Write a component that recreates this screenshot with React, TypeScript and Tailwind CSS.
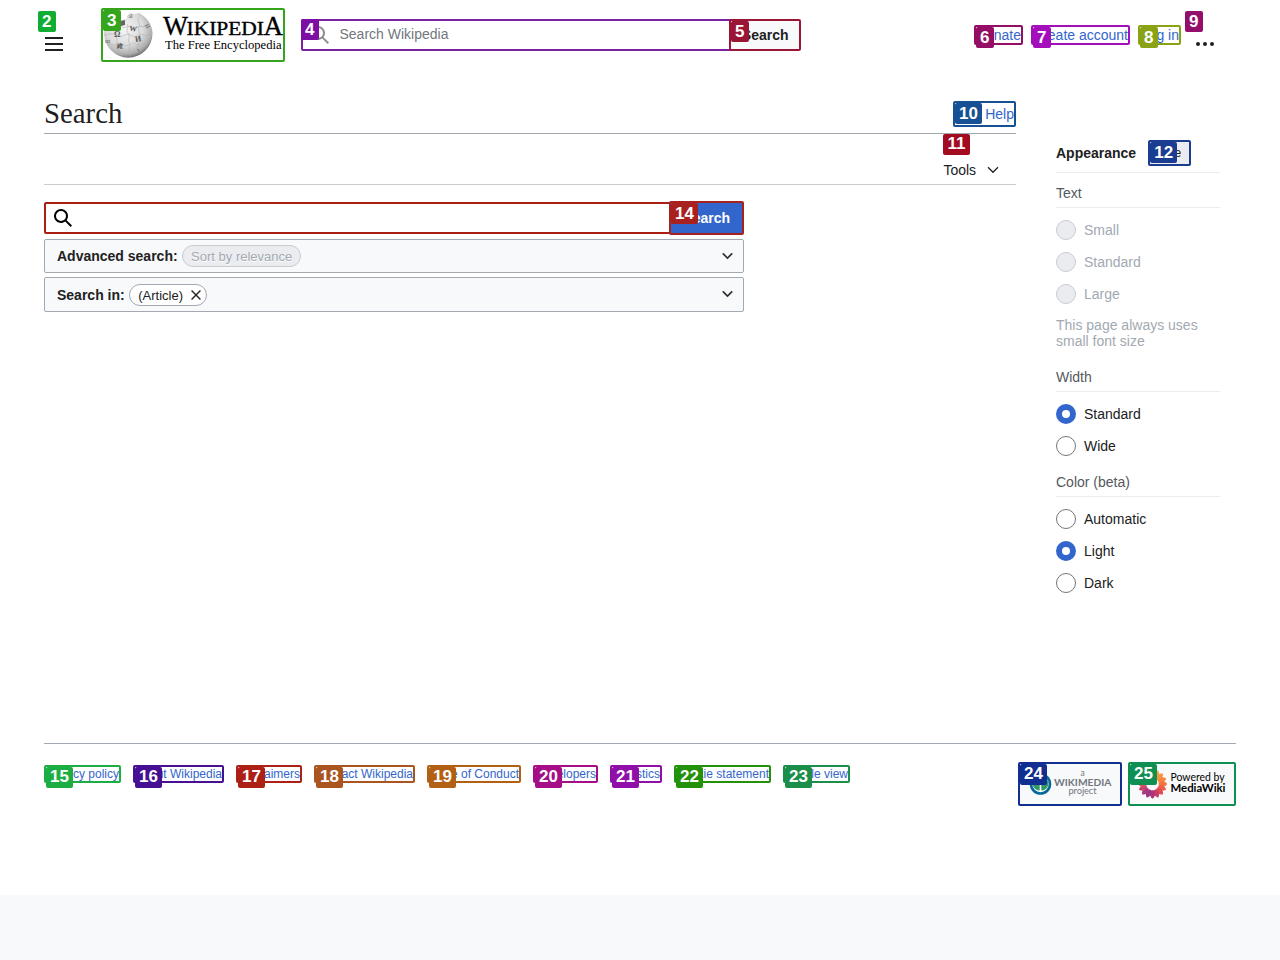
import type { ReactNode } from 'react';
import clsx from 'clsx';

const SEARCH = 'M12.2 13.6a7 7 0 1 1 1.4-1.4l5.4 5.4-1.4 1.4zM3 8a5 5 0 1 0 10 0A5 5 0 0 0 3 8';
const EXPAND = 'm17.5 4.75-7.5 7.5-7.5-7.5L1 6.25l9 9 9-9z';
const CLOSE =
  'm4.34 2.93 12.73 12.73-1.41 1.41L2.93 4.35zM17.07 4.34 4.34 17.07l-1.41-1.41L15.66 2.93z';

function Icon({ d, className }: { d: string; className: string }) {
  return (
    <svg viewBox="0 0 20 20" className={clsx('shrink-0 fill-current', className)}>
      <path d={d} />
    </svg>
  );
}

type BadgeProps = { n: number; color: string; className?: string; raised?: boolean };

function Badge({ n, color, className = 'left-0 top-0', raised }: BadgeProps) {
  return (
    <span
      className={clsx(
        'absolute z-10 flex h-[21px] justify-center rounded-[2px] text-[17px] font-bold text-white',
        raised ? 'leading-[19px]' : 'leading-[21px]',
        n > 9 ? 'w-[27px]' : 'w-[17.5px]',
        color,
        className,
      )}
    >
      {n}
    </span>
  );
}

type BoxProps = {
  n: number;
  border: string;
  bg: string;
  className: string;
  raised?: boolean;
  children: ReactNode;
};

function Box({ n, border, bg, className, raised, children }: BoxProps) {
  return (
    <div className={clsx('relative flex shrink-0 items-center rounded-[2px] border-2 whitespace-nowrap', border, className)}>
      <Badge n={n} color={bg} raised={raised} />
      {children}
    </div>
  );
}

function Logo() {
  return (
    <svg viewBox="103 10 180 50" className="h-[50px] w-[180px]">
      <defs>
        <radialGradient id="globe" cx="0.42" cy="0.35" r="0.65">
          <stop offset="0" stopColor="#f6f6f6" />
          <stop offset="0.6" stopColor="#dadada" />
          <stop offset="0.88" stopColor="#adadad" />
          <stop offset="1" stopColor="#777" />
        </radialGradient>
      </defs>
      <path
        d="M114 15l6 6 8-3 1-5 6 1 4-1c8 4 13.500 12 13.500 20.500a24.200 24.200 0 0 1-48.400 0C104.100 25 108 18.500 114 15z"
        fill="url(#globe)"
      />
      <path d="M120 21l5-1v5l-4 1z" fill="#666" />
      <g fill="none" stroke="#b0b0b0" strokeWidth="0.6">
        <path d="M104 35c3 1 4-2 7-1s3-1 6 0 2 4 6 2 3-2 7-1 3 3 7 1 3-2 7-1 4 1 8-1" />
        <path d="M107 45c4-2 5 1 8 0s3-3 7-1 3 2 7 1 4-3 7-1 5 1 12-1" />
        <path d="M122 27c3 2 5-2 8 0s4 2 7 0 5 1 8-1" />
        <path d="M116 30c2 3-2 4 0 7s1 5 0 8 3 4 5 10M127 24c3 4-2 5 1 9s-1 5 1 9-1 4 1 14M139 17c-3 5 2 6 0 10s2 5 0 9 2 5-1 9 1 3-1 8" />
      </g>
      <g fill="#555" fontFamily="Liberation Serif, serif">
        <text x="114" y="36.500" fontSize="8" fontWeight="bold">Ω</text>
        <text x="129" y="30.500" fontSize="7.500" fontWeight="bold" transform="rotate(10 129 30)">W</text>
        <text x="135.500" y="42" fontSize="8" fontWeight="bold" transform="rotate(-10 135 42)">И</text>
        <text x="117" y="47.500" fontSize="6" fontWeight="bold">維</text>
        <text x="144" y="26" fontSize="6" transform="rotate(60 145 26)">И</text>
        <text x="105" y="43" fontSize="5">Ш</text>
        <text x="137" y="52" fontSize="5">ን</text>
        <text x="127" y="18" fontSize="5">വി</text>
      </g>
      <g fontFamily="Liberation Serif, serif" fill="#000" stroke="#000">
        <text x="163" y="34.800" fontSize="26.500" strokeWidth="0.35" textLength="25" lengthAdjust="spacingAndGlyphs">W</text>
        <text x="186.500" y="34.800" fontSize="19.300" strokeWidth="0.35" textLength="77.500" lengthAdjust="spacingAndGlyphs">IKIPEDI</text>
        <text x="263.500" y="34.800" fontSize="26.500" strokeWidth="0.35" textLength="19.500" lengthAdjust="spacingAndGlyphs">A</text>
        <text x="165" y="49.200" fontSize="13.300" strokeWidth="0" textLength="116.500" lengthAdjust="spacingAndGlyphs">The Free Encyclopedia</text>
      </g>
    </svg>
  );
}

function Radio({ label, on, disabled }: { label: string; on?: boolean; disabled?: boolean }) {
  return (
    <div className={clsx('flex h-8 items-center gap-2', disabled && 'text-[#a2a9b1]')}>
      <span
        className={clsx(
          'h-5 w-5 rounded-full',
          disabled && 'border border-[#c8ccd1] bg-[#eaecf0]',
          on && 'border-[6px] border-[#3366cc] bg-white',
          !on && !disabled && 'border border-[#72777d] bg-white',
        )}
      />
      {label}
    </div>
  );
}

function GroupTitle({ children }: { children: ReactNode }) {
  return <div className="flex h-[30px] items-center border-b border-[#eaecf0] text-[#54595d]">{children}</div>;
}

const footerLinks = [
  { n: 15, label: 'Privacy policy', border: 'border-[#1cae42]', bg: 'bg-[#1cae42]', w: 'w-[77px]' },
  { n: 16, label: 'About Wikipedia', border: 'border-[#470f94]', bg: 'bg-[#470f94]', w: 'w-[91px]' },
  { n: 17, label: 'Disclaimers', border: 'border-[#ad2016]', bg: 'bg-[#ad2016]', w: 'w-[66px]' },
  { n: 18, label: 'Contact Wikipedia', border: 'border-[#aa551f]', bg: 'bg-[#aa551f]', w: 'w-[101px]' },
  { n: 19, label: 'Code of Conduct', border: 'border-[#b26114]', bg: 'bg-[#b26114]', w: 'w-[94px]' },
  { n: 20, label: 'Developers', border: 'border-[#a50e87]', bg: 'bg-[#a50e87]', w: 'w-[65px]' },
  { n: 21, label: 'Statistics', border: 'border-[#900fa8]', bg: 'bg-[#900fa8]', w: 'w-[52px]' },
  { n: 22, label: 'Cookie statement', border: 'border-[#24910b]', bg: 'bg-[#24910b]', w: 'w-[97px]' },
  { n: 23, label: 'Mobile view', border: 'border-[#1b8e4a]', bg: 'bg-[#1b8e4a]', w: 'w-[67px]' },
];

const petals = Array.from({ length: 16 }, (_, i) => i * 22.5);
const petalColors = ['#fbb040', '#fba33f', '#f9953f', '#f8853f', '#f4743f', '#ee5f49', '#e04a55', '#cb3c65', '#b03475', '#9c3584', '#a93a7b', '#c8446d', '#dd5160', '#ed6a53', '#f68448', '#fb9d42'];

export default function App() {
  return (
    <div className="flex h-[960px] w-[1280px] flex-col overflow-hidden bg-[#f8f9fa] font-['Liberation_Sans',sans-serif] text-[14px] leading-4 text-[#202122]">
      <div className="flex h-[895px] flex-col bg-white">
        <header className="flex h-[70px] shrink-0 items-center pr-[63px] pl-[38px]">
          <div className="relative h-12 w-8 pt-[26px] pl-[7px]">
            <Badge n={2} color="bg-[#10ad34]" />
            <div className="flex w-[18px] flex-col gap-1">
              <span className="h-0.5 bg-[#202122]" />
              <span className="h-0.5 bg-[#202122]" />
              <span className="h-0.5 bg-[#202122]" />
            </div>
          </div>
          <Box n={3} border="border-[#34a51c]" bg="bg-[#34a51c]" className="ml-[31px] h-[54px] w-[184px]">
            <Logo />
          </Box>
          <div className="ml-4 flex">
            <div className="relative flex h-8 w-[430px] items-center rounded-l-[2px] border-2 border-[#7b22a0] pl-[7px]">
              <Badge n={4} color="bg-[#7d0ea3]" className="-left-0.5 -top-0.5" />
              <Icon d={SEARCH} className="h-5 w-5 text-[#8f8f8f]" />
              <span className="ml-[9.500px] -translate-y-px text-[#72777d]">Search Wikipedia</span>
            </div>
            <Box n={5} border="border-[#9b1635]" bg="bg-[#9b1635]" className="-ml-0.5 h-8 w-[72px] justify-end bg-[#f8f9fa] pr-[10.500px] font-bold">
              Search
            </Box>
          </div>
          <nav className="ml-auto flex items-center gap-2 text-[#3366cc]">
            <Box n={6} border="border-[#930e64]" bg="bg-[#930e64]" className="h-5 w-[49px] justify-end">Donate</Box>
            <Box n={7} border="border-[#a40fbb]" bg="bg-[#a40fbb]" className="h-5 w-[99px] justify-end">Create account</Box>
            <Box n={8} border="border-[#8aa315]" bg="bg-[#8aa315]" className="h-5 w-[43px] justify-end">Log in</Box>
          </nav>
          <div className="relative ml-1 h-12 w-8 pt-[31px] pl-[11px]">
            <Badge n={9} color="bg-[#940e6c]" />
            <div className="flex gap-[3px]">
              <span className="h-1 w-1 rounded-full bg-[#202122]" />
              <span className="h-1 w-1 rounded-full bg-[#202122]" />
              <span className="h-1 w-1 rounded-full bg-[#202122]" />
            </div>
          </div>
        </header>

        <div className="flex h-[673px] shrink-0 pl-11">
          <main className="w-[972px] pt-7">
            <div className="flex h-9 items-center border-b border-[#a2a9b1]">
              <h1 className="-translate-y-[3px] font-['Liberation_Serif',serif] text-[28.800px] leading-9 text-black/90">Search</h1>
              <Box n={10} border="border-[#165293]" bg="bg-[#165293]" className="-mt-[3px] ml-auto h-[26px] w-[63px] justify-end bg-white text-[#3366cc]">
                Help
              </Box>
            </div>
            <div className="flex h-[51px] justify-end border-b border-[#c8ccd1]">
              <div className="relative flex w-[72.600px] items-center gap-[11px] pt-[22px]">
                <Badge n={11} color="bg-[#a20b20]" raised className="-left-[0.4px] top-0" />
                Tools
                <Icon d={EXPAND} className="h-3 w-3" />
              </div>
            </div>
            <div className="mt-4 flex w-[700px] flex-col gap-1">
              <div className="flex h-[34px] items-center">
                <div className="flex h-8 w-[627px] items-center rounded-[2px] border-2 border-[#ab1f11] pl-[7px]">
                  <Icon d={SEARCH} className="h-5 w-5 text-black" />
                </div>
                <Box n={14} border="border-[#a9211f]" bg="bg-[#a9211f]" className="-ml-0.5 h-[34px] w-[75px] justify-end bg-[#3366cc] pr-3 font-bold text-white">
                  Search
                </Box>
              </div>
              <div className="flex h-[34px] items-center rounded-[2px] border border-[#a2a9b1] bg-[#f8f9fa] pr-2.5 pl-3">
                <b>Advanced search:</b>
                <span className="ml-1 flex h-[22px] w-[119px] items-center rounded-full border border-[#c8ccd1] bg-[#eaecf0] pt-px pl-[8.500px] text-[13px] text-[#a2a9b1] [text-shadow:0_1px_0_white]">
                  Sort by relevance
                </span>
                <Icon d={EXPAND} className="ml-auto h-[11px] w-[11px] -translate-y-[0.500px] stroke-current stroke-1" />
              </div>
              <div className="flex h-[35px] items-center rounded-[2px] border border-[#a2a9b1] bg-[#f8f9fa] pr-2.5 pl-3">
                <b>Search in:</b>
                <span className="ml-1 flex h-[22px] w-[78px] items-center rounded-full border border-[#a2a9b1] bg-white pl-[8.500px] text-[13px]">
                  <span className="pt-0.5">(Article)</span>
                  <Icon d={CLOSE} className="ml-[6.500px] h-[14px] w-[14px]" />
                </span>
                <Icon d={EXPAND} className="ml-auto h-[11px] w-[11px] -translate-y-[0.500px] stroke-current stroke-1" />
              </div>
            </div>
          </main>

          <aside className="ml-10 w-[164px] pt-[63px]">
            <div className="flex h-10 items-center border-b border-[#eaecf0]">
              <b>Appearance</b>
              <Box n={12} border="border-[#1a3c91]" bg="bg-[#1a3c91]" className="ml-3 h-[26px] w-[43px] justify-end bg-[#eaecf0] pr-2 text-[12px]">
                hide
              </Box>
            </div>
            <div className="mt-[5px]">
              <GroupTitle>Text</GroupTitle>
              <div className="pt-1.5">
                <Radio label="Small" disabled />
                <Radio label="Standard" disabled />
                <Radio label="Large" disabled />
              </div>
              <p className="mt-[7px] text-[#a2a9b1]">This page always uses small font size</p>
            </div>
            <div className="mt-[13px]">
              <GroupTitle>Width</GroupTitle>
              <div className="pt-1.5">
                <Radio label="Standard" on />
                <Radio label="Wide" />
              </div>
            </div>
            <div className="mt-[5px]">
              <GroupTitle>Color (beta)</GroupTitle>
              <div className="pt-1.5">
                <Radio label="Automatic" />
                <Radio label="Light" on />
                <Radio label="Dark" />
              </div>
            </div>
          </aside>
        </div>

        <footer className="mx-11 flex items-start justify-between border-t border-[#a2a9b1] pt-[18px]">
          <div className="flex gap-3 pt-[3px] text-[12px] text-[#3366cc]">
            {footerLinks.map((link) => (
              <Box key={link.n} n={link.n} border={link.border} bg={link.bg} raised className={clsx('h-[18px] justify-end', link.w)}>
                {link.label}
              </Box>
            ))}
          </div>
          <div className="flex gap-1.5">
            <Box n={24} border="border-[#102f91]" bg="bg-[#102f91]" raised className="h-11 w-[104px] bg-[#f8f9fa]">
              <svg viewBox="1020 764 100 40" className="h-10 w-[100px]">
                <circle cx="1040.500" cy="784" r="9.500" fill="#fff" stroke="#06699b" strokeWidth="2.600" />
                <path d="M1033.500 780a7 7 0 0 0 6.200 10.500V782zM1047.500 780a7 7 0 0 1-6.200 10.500V782z" fill="#339966" />
                <circle cx="1040.500" cy="778" r="3" fill="#990000" />
                <g fill="#72777d" fontFamily="Lato, sans-serif">
                  <text x="1080.500" y="775.500" fontSize="8.500">a</text>
                  <text x="1054" y="785.700" fontSize="9.300" fontWeight="bold" textLength="57.500" lengthAdjust="spacingAndGlyphs">WIKIMEDIA</text>
                  <text x="1068.500" y="794" fontSize="9.300" textLength="28" lengthAdjust="spacing">project</text>
                </g>
              </svg>
            </Box>
            <Box n={25} border="border-[#108f52]" bg="bg-[#108f52]" raised className="h-11 w-[108px] bg-[#f8f9fa]">
              <svg viewBox="1130 764 104 40" className="h-10 w-[104px]">
                {petals.map((angle, i) => (
                  <path
                    key={angle}
                    d="M1151.300 777.800l-1.700-4.300 1.400-2.800 1.500-1.500 1.500 1.500 1.400 2.800-1.700 4.300z"
                    fill={petalColors[i]}
                    transform={`rotate(${angle} 1152.500 784)`}
                  />
                ))}
                <g fill="#000" fontFamily="Lato, sans-serif">
                  <text x="1170.500" y="780.600" fontSize="10.500" textLength="54" lengthAdjust="spacingAndGlyphs">Powered by</text>
                  <text x="1170.500" y="791.700" fontSize="11" fontWeight="bold" textLength="55" lengthAdjust="spacingAndGlyphs">MediaWiki</text>
                </g>
              </svg>
            </Box>
          </div>
        </footer>
      </div>
    </div>
  );
}
